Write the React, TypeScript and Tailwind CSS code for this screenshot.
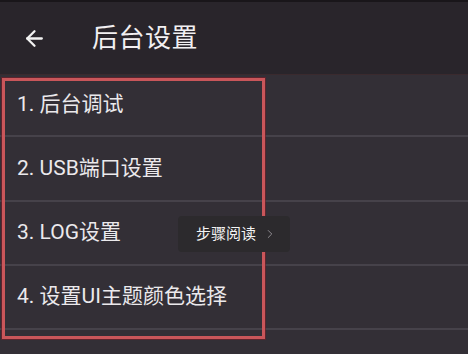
import { ArrowLeft, ChevronRight } from "lucide-react";

const items = [
  { label: "1. 后台调试", h: "h-[62px]" },
  { label: "2. USB端口设置", h: "h-[65px]" },
  { label: "3. LOG设置", h: "h-[64px]" },
  { label: "4. 设置UI主题颜色选择", h: "h-[64px]" },
];

export default function App() {
  return (
    <div
      className="relative w-[468px] h-[354px] overflow-hidden bg-[#332f36] text-[#ebe9ec]"
      style={{ fontFamily: "Roboto, 'Noto Sans CJK SC', sans-serif" }}
    >
      <div className="h-[2px] bg-[#19161a]" />
      <header className="flex items-center h-[73px] bg-[#29252b] border-b border-[#3a2a2e]">
        <ArrowLeft className="ml-[22px] w-[25px] h-[25px] text-[#f2f2f2]" strokeWidth={2.2} />
        <h1 className="ml-[45px] text-[26px] tracking-[0.5px] text-[#f2f0f2]">后台设置</h1>
      </header>

      <ul>
        {items.map((item, i) => (
          <li
            key={i}
            className={`flex items-center pl-[17px] text-[21px] border-b-2 border-[#46424a] ${item.h}`}
          >
            {item.label}
          </li>
        ))}
      </ul>

      {/* red annotation box */}
      <div className="absolute left-[2px] top-[78px] w-[263px] h-[261px] border-[3px] border-[#c9565a] shadow-[0_0_0_1px_rgba(120,30,40,0.6)]" />

      {/* step-reading badge */}
      <div className="absolute left-[178px] top-[216px] w-[112px] h-[36px] flex items-center pl-[18px] bg-[#2c2a2d] rounded-sm">
        <span className="text-[15px] text-[#f4f4f4]">步骤阅读</span>
        <ChevronRight className="ml-[7px] w-[14px] h-[14px] text-[#9a979b]" strokeWidth={1.5} />
      </div>
    </div>
  );
}
